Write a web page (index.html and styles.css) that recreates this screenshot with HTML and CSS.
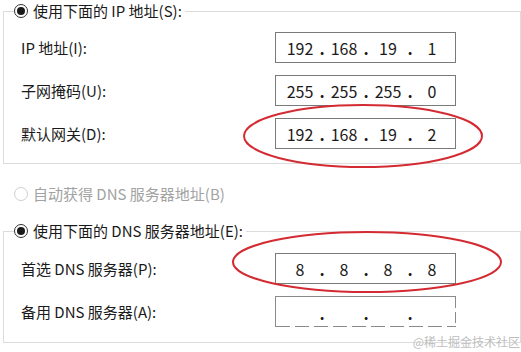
FILE: index.html
```html
<!DOCTYPE html>
<html lang="zh-CN">
<head>
  <meta charset="UTF-8" />
  <meta name="viewport" content="width=device-width, initial-scale=1.0" />
  <title>IP 设置</title>
  <link rel="stylesheet" href="styles.css">
</head>
<body>
  <!-- IP 地址 -->
  <fieldset class="group">
    <legend><span class="option"><span class="radio checked"></span>使用下面的 IP 地址(S):</span></legend>
    <div class="row">
      <span class="label">IP 地址(I):</span>
      <div class="ip"><span>192</span><i>.</i><span>168</span><i>.</i><span>19</span><i>.</i><span>1</span></div>
    </div>
    <div class="row">
      <span class="label">子网掩码(U):</span>
      <div class="ip"><span>255</span><i>.</i><span>255</span><i>.</i><span>255</span><i>.</i><span>0</span></div>
    </div>
    <div class="row">
      <span class="label">默认网关(D):</span>
      <div class="ip"><span>192</span><i>.</i><span>168</span><i>.</i><span>19</span><i>.</i><span>2</span></div>
    </div>
  </fieldset>

  <div class="option auto"><span class="radio"></span>自动获得 DNS 服务器地址(B)</div>

  <!-- DNS -->
  <fieldset class="group dns">
    <legend><span class="option"><span class="radio checked"></span>使用下面的 DNS 服务器地址(E):</span></legend>
    <div class="row">
      <span class="label">首选 DNS 服务器(P):</span>
      <div class="ip"><span>8</span><i>.</i><span>8</span><i>.</i><span>8</span><i>.</i><span>8</span></div>
    </div>
    <div class="row">
      <span class="label">备用 DNS 服务器(A):</span>
      <div class="ip broken"><span></span><i>.</i><span></span><i>.</i><span></span><i>.</i><span></span></div>
    </div>
  </fieldset>

  <!-- 标注 -->
  <svg class="marks" width="521" height="352" viewBox="0 0 521 352">
    <ellipse cx="363" cy="136" rx="119" ry="31" />
    <ellipse cx="367" cy="262" rx="134" ry="30" />
  </svg>

  <div class="watermark">@稀土掘金技术社区</div>
</body>
</html>
```

FILE: styles.css
```css
* {
  margin: 0;
  padding: 0;
  box-sizing: border-box;
}

body {
  width: 521px;
  height: 352px;
  overflow: hidden;
  position: relative;
  padding-top: 1px;
  background: #fff;
  color: #1a1a1a;
  font-family: "Noto Sans CJK SC", sans-serif;
  font-size: 15px;
}

.group {
  width: 518px;
  margin-left: 3px;
  border: 1px solid #dcdcdc;
  padding: 11px 0 14px 17px;
}

.group.dns {
  padding: 12px 0 15px 17px;
}

.group legend {
  margin-left: -7px;
  padding-right: 3px;
}

.option {
  display: flex;
  align-items: center;
  gap: 5px;
  height: 20px;
  line-height: 20px;
}

.radio {
  position: relative;
  width: 14px;
  height: 14px;
  border: 1px solid #333;
  border-radius: 50%;
  background: #fff;
}

.radio.checked::after {
  content: "";
  position: absolute;
  top: 2px;
  left: 2px;
  width: 8px;
  height: 8px;
  border-radius: 50%;
  background: #1a1a1a;
}

.auto {
  margin: 20px 0 17px 14px;
  color: #a2a2a2;
}

.auto .radio {
  border-color: #cfcfcf;
}

.row {
  display: flex;
  align-items: center;
  height: 31px;
}

.row + .row {
  margin-top: 12px;
}

.label {
  width: 254px;
}

.ip {
  display: flex;
  align-items: center;
  width: 181px;
  height: 31px;
  padding-left: 6px;
  border: 1px solid #7a7a7a;
  font-size: 16px;
}

.ip span {
  width: 36px;
  text-align: center;
}

.ip i {
  width: 8px;
  font-style: normal;
  font-weight: bold;
  text-align: center;
}

/* 截图里这一格的下边和右边是断开的 */
.ip.broken {
  border-color: #8a8a8a;
  border-right-width: 0;
  border-bottom-width: 0;
  padding-top: 1px;
  background:
    repeating-linear-gradient(90deg, #8a8a8a 0 14px, transparent 14px 19px) left bottom / 100% 1px no-repeat,
    repeating-linear-gradient(180deg, #8a8a8a 0 11px, transparent 11px 15px) right top / 1px 100% no-repeat;
}

.marks {
  position: absolute;
  top: 0;
  left: 0;
  pointer-events: none;
}

.marks ellipse {
  fill: none;
  stroke: #d42b33;
  stroke-width: 2;
}

.watermark {
  position: absolute;
  right: 1px;
  bottom: 3px;
  font-size: 12px;
  line-height: 14px;
  color: #bdbdbd;
  text-shadow: 0 0 2px #fff;
}
```
